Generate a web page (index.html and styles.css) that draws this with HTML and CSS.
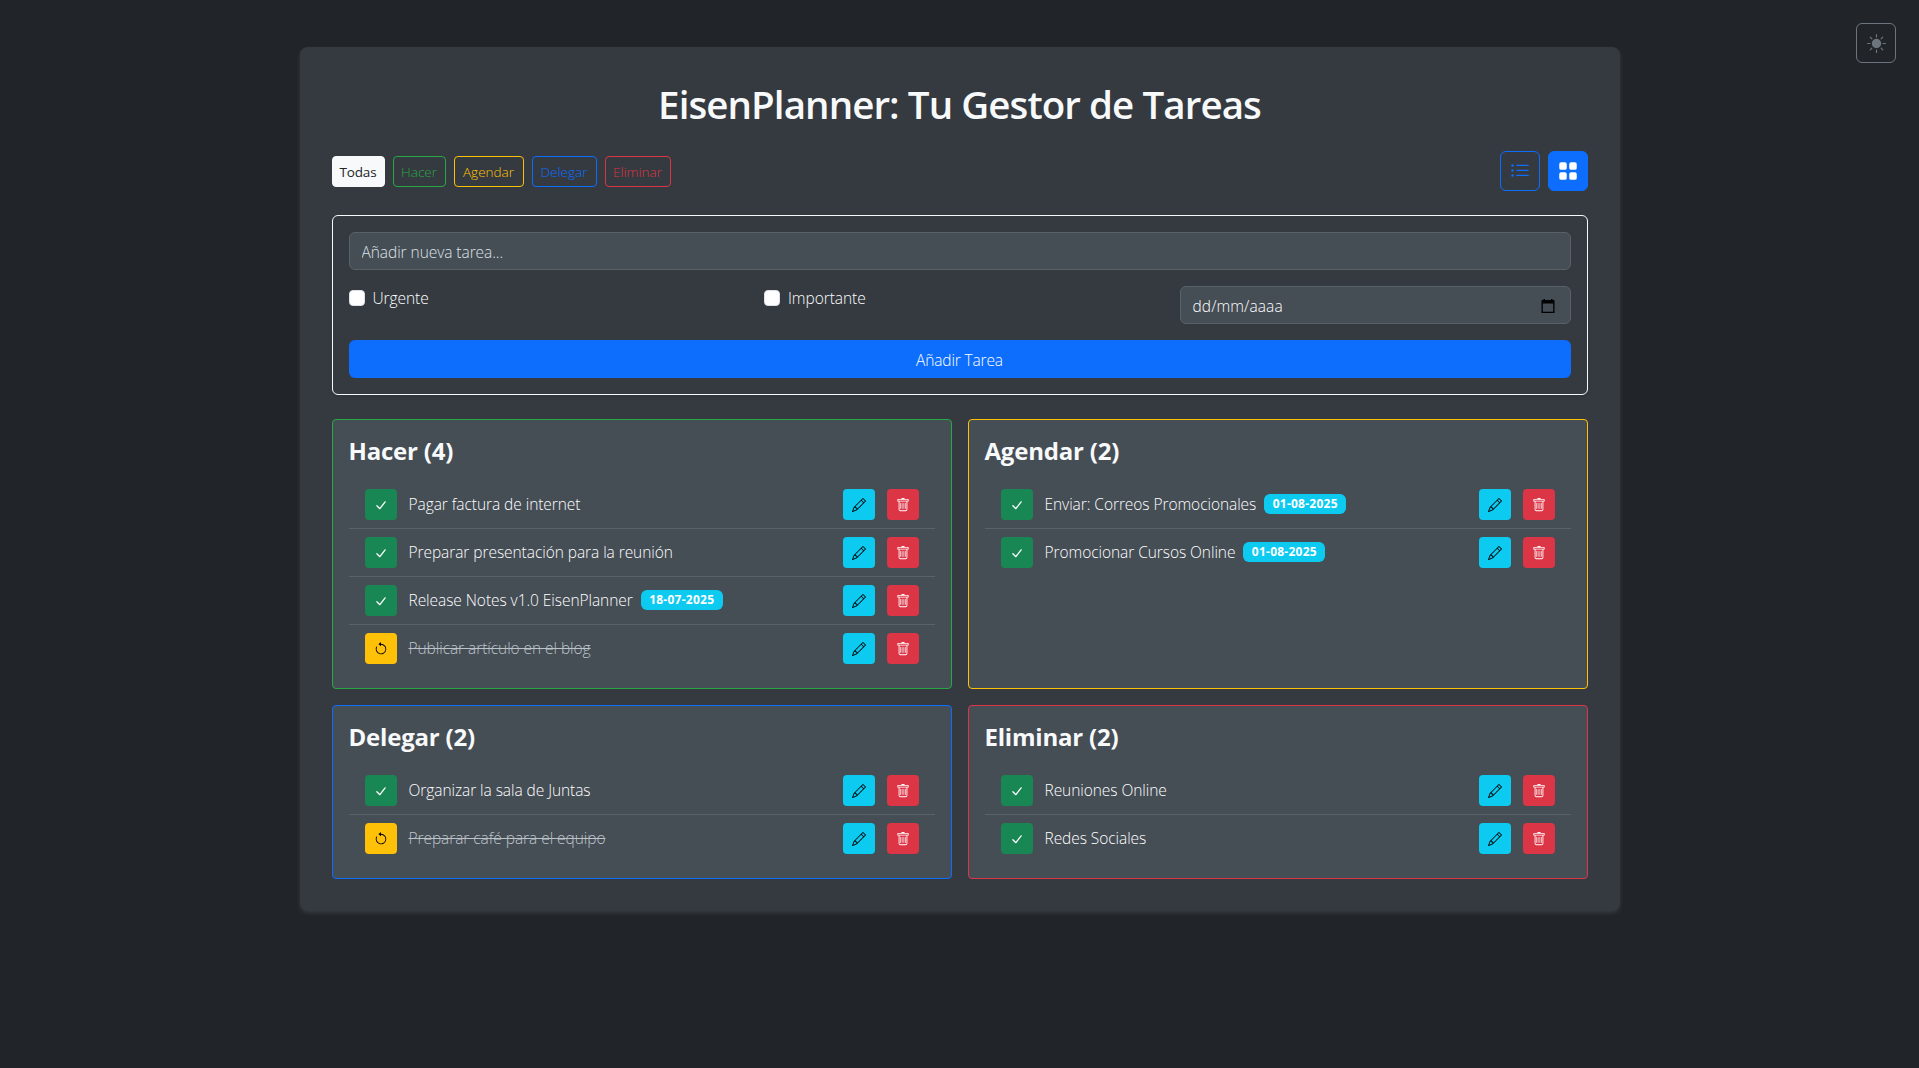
FILE: index.html
```html
<!DOCTYPE html>
<html lang="es">
<head>
<meta charset="utf-8">
<title>EisenPlanner: Tu Gestor de Tareas</title>
<link rel="stylesheet" href="styles.css">
</head>
<body>
<svg class="sprite" aria-hidden="true">
  <symbol id="sun" viewBox="0 0 16 16"><path d="M8 12a4 4 0 1 0 0-8 4 4 0 0 0 0 8M8 0a.5.5 0 0 1 .5.5v2a.5.5 0 0 1-1 0v-2A.5.5 0 0 1 8 0m0 13a.5.5 0 0 1 .5.5v2a.5.5 0 0 1-1 0v-2A.5.5 0 0 1 8 13m8-5a.5.5 0 0 1-.5.5h-2a.5.5 0 0 1 0-1h2a.5.5 0 0 1 .5.5M3 8a.5.5 0 0 1-.5.5h-2a.5.5 0 0 1 0-1h2A.5.5 0 0 1 3 8m10.657-5.657a.5.5 0 0 1 0 .707l-1.414 1.415a.5.5 0 1 1-.707-.708l1.414-1.414a.5.5 0 0 1 .707 0m-9.193 9.193a.5.5 0 0 1 0 .707L3.050 13.657a.5.5 0 0 1-.707-.707l1.414-1.414a.5.5 0 0 1 .707 0m9.193 2.121a.5.5 0 0 1-.707 0l-1.414-1.414a.5.5 0 0 1 .707-.707l1.414 1.414a.5.5 0 0 1 0 .707M4.464 4.465a.5.5 0 0 1-.707 0L2.343 3.050a.5.5 0 1 1 .707-.707l1.414 1.414a.5.5 0 0 1 0 .708"/></symbol>
  <symbol id="list" viewBox="0 0 16 16"><path fill-rule="evenodd" d="M5 11.500a.5.5 0 0 1 .5-.5h9a.5.5 0 0 1 0 1h-9a.5.5 0 0 1-.5-.5m0-4a.5.5 0 0 1 .5-.5h9a.5.5 0 0 1 0 1h-9a.5.5 0 0 1-.5-.5m0-4a.5.5 0 0 1 .5-.5h9a.5.5 0 0 1 0 1h-9a.5.5 0 0 1-.5-.5m-3 1a1 1 0 1 0 0-2 1 1 0 0 0 0 2m0 4a1 1 0 1 0 0-2 1 1 0 0 0 0 2m0 4a1 1 0 1 0 0-2 1 1 0 0 0 0 2"/></symbol>
  <symbol id="grid" viewBox="0 0 16 16"><path d="M1 2.500A1.500 1.500 0 0 1 2.500 1h3A1.500 1.500 0 0 1 7 2.500v3A1.500 1.500 0 0 1 5.500 7h-3A1.500 1.500 0 0 1 1 5.500zm8 0A1.500 1.500 0 0 1 10.500 1h3A1.500 1.500 0 0 1 15 2.500v3A1.500 1.500 0 0 1 13.500 7h-3A1.500 1.500 0 0 1 9 5.500zm-8 8A1.500 1.500 0 0 1 2.500 9h3A1.500 1.500 0 0 1 7 10.500v3A1.500 1.500 0 0 1 5.500 15h-3A1.500 1.500 0 0 1 1 13.500zm8 0A1.500 1.500 0 0 1 10.500 9h3a1.500 1.500 0 0 1 1.500 1.500v3a1.500 1.500 0 0 1-1.500 1.500h-3A1.500 1.500 0 0 1 9 13.500z"/></symbol>
  <symbol id="check" viewBox="0 0 16 16"><path d="M3.300 8.800 6.700 12.200 12.700 4.400" fill="none" stroke="currentColor" stroke-width="1.500" stroke-linecap="round" stroke-linejoin="round"/></symbol>
  <symbol id="undo" viewBox="0 0 16 16"><path fill-rule="evenodd" d="M8 3a5 5 0 1 1-4.546 2.914.5.5 0 0 0-.908-.417A6 6 0 1 0 8 2z"/><path d="M8 4.466V.534a.25.25 0 0 0-.41-.192L5.230 2.308a.25.25 0 0 0 0 .384l2.360 1.966A.25.25 0 0 0 8 4.466"/></symbol>
  <symbol id="pencil" viewBox="0 0 16 16"><path d="M12.146.146a.5.5 0 0 1 .708 0l3 3a.5.5 0 0 1 0 .708l-10 10a.5.5 0 0 1-.168.110l-5 2a.5.5 0 0 1-.650-.650l2-5a.5.5 0 0 1 .110-.168zM11.207 2.500 13.500 4.793 14.793 3.500 12.500 1.207zm1.586 3L10.500 3.207 4 9.707V10h.5a.5.5 0 0 1 .5.5v.5h.5a.5.5 0 0 1 .5.5v.5h.293zm-9.761 5.175-.106.106-1.528 3.821 3.821-1.528.106-.106A.5.5 0 0 1 5 12.500V12h-.5a.5.5 0 0 1-.5-.5V11h-.5a.5.5 0 0 1-.468-.325"/></symbol>
  <symbol id="trash" viewBox="0 0 16 16"><path d="M5.500 5.500A.5.5 0 0 1 6 6v6a.5.5 0 0 1-1 0V6a.5.5 0 0 1 .5-.5m2.500 0a.5.5 0 0 1 .5.5v6a.5.5 0 0 1-1 0V6a.5.5 0 0 1 .5-.5m3 .5a.5.5 0 0 0-1 0v6a.5.5 0 0 0 1 0z"/><path d="M14.500 3a1 1 0 0 1-1 1H13v9a2 2 0 0 1-2 2H5a2 2 0 0 1-2-2V4h-.5a1 1 0 0 1-1-1V2a1 1 0 0 1 1-1H6a1 1 0 0 1 1-1h2a1 1 0 0 1 1 1h3.500a1 1 0 0 1 1 1zM4.118 4 4 4.059V13a1 1 0 0 0 1 1h6a1 1 0 0 0 1-1V4.059L11.882 4zM2.500 3h11V2h-11z"/></symbol>
  <symbol id="calendar" viewBox="0 0 14 14"><path fill-rule="evenodd" d="M2.500 0H4v1h6V0h1.500v1H13a.5.5 0 0 1 .5.5v12a.5.5 0 0 1-.5.5H1a.5.5 0 0 1-.5-.5v-12A.5.5 0 0 1 1 1h1.500zM1.800 4.500v8.200h10.400V4.500z"/></symbol>
</svg>

<button class="theme-toggle" aria-label="Cambiar tema"><svg class="icon-theme"><use href="#sun"/></svg></button>

<main class="planner">
  <h1>EisenPlanner: Tu Gestor de Tareas</h1>

  <div class="toolbar">
    <div class="filters">
      <button class="filter filter-all">Todas</button>
      <button class="filter filter-do">Hacer</button>
      <button class="filter filter-plan">Agendar</button>
      <button class="filter filter-delegate">Delegar</button>
      <button class="filter filter-drop">Eliminar</button>
    </div>
    <div class="views">
      <button class="view" aria-label="Lista"><svg><use href="#list"/></svg></button>
      <button class="view view-active" aria-label="Matriz"><svg><use href="#grid"/></svg></button>
    </div>
  </div>

  <form class="task-form">
    <input class="field" type="text" placeholder="Añadir nueva tarea...">
    <div class="options">
      <label class="option"><input type="checkbox">Urgente</label>
      <label class="option"><input type="checkbox">Importante</label>
      <div class="field date"><span>dd/mm/aaaa</span><svg><use href="#calendar"/></svg></div>
    </div>
    <button class="submit" type="button">Añadir Tarea</button>
  </form>

  <div class="matrix">
    <section class="quadrant do">
      <h2>Hacer (4)</h2>
      <ul>
        <li><button class="btn done"><svg><use href="#check"/></svg></button><span class="text">Pagar factura de internet</span><button class="btn edit"><svg><use href="#pencil"/></svg></button><button class="btn delete"><svg><use href="#trash"/></svg></button></li>
        <li><button class="btn done"><svg><use href="#check"/></svg></button><span class="text">Preparar presentación para la reunión</span><button class="btn edit"><svg><use href="#pencil"/></svg></button><button class="btn delete"><svg><use href="#trash"/></svg></button></li>
        <li><button class="btn done"><svg><use href="#check"/></svg></button><span class="text">Release Notes v1.0 EisenPlanner</span><span class="badge">18-07-2025</span><button class="btn edit"><svg><use href="#pencil"/></svg></button><button class="btn delete"><svg><use href="#trash"/></svg></button></li>
        <li><button class="btn undo"><svg><use href="#undo"/></svg></button><span class="text completed">Publicar artículo en el blog</span><button class="btn edit"><svg><use href="#pencil"/></svg></button><button class="btn delete"><svg><use href="#trash"/></svg></button></li>
      </ul>
    </section>
    <section class="quadrant plan">
      <h2>Agendar (2)</h2>
      <ul>
        <li><button class="btn done"><svg><use href="#check"/></svg></button><span class="text">Enviar: Correos Promocionales</span><span class="badge">01-08-2025</span><button class="btn edit"><svg><use href="#pencil"/></svg></button><button class="btn delete"><svg><use href="#trash"/></svg></button></li>
        <li><button class="btn done"><svg><use href="#check"/></svg></button><span class="text">Promocionar Cursos Online</span><span class="badge">01-08-2025</span><button class="btn edit"><svg><use href="#pencil"/></svg></button><button class="btn delete"><svg><use href="#trash"/></svg></button></li>
      </ul>
    </section>
    <section class="quadrant delegate">
      <h2>Delegar (2)</h2>
      <ul>
        <li><button class="btn done"><svg><use href="#check"/></svg></button><span class="text">Organizar la sala de Juntas</span><button class="btn edit"><svg><use href="#pencil"/></svg></button><button class="btn delete"><svg><use href="#trash"/></svg></button></li>
        <li><button class="btn undo"><svg><use href="#undo"/></svg></button><span class="text completed">Preparar café para el equipo</span><button class="btn edit"><svg><use href="#pencil"/></svg></button><button class="btn delete"><svg><use href="#trash"/></svg></button></li>
      </ul>
    </section>
    <section class="quadrant drop">
      <h2>Eliminar (2)</h2>
      <ul>
        <li><button class="btn done"><svg><use href="#check"/></svg></button><span class="text">Reuniones Online</span><button class="btn edit"><svg><use href="#pencil"/></svg></button><button class="btn delete"><svg><use href="#trash"/></svg></button></li>
        <li><button class="btn done"><svg><use href="#check"/></svg></button><span class="text">Redes Sociales</span><button class="btn edit"><svg><use href="#pencil"/></svg></button><button class="btn delete"><svg><use href="#trash"/></svg></button></li>
      </ul>
    </section>
  </div>
</main>
</body>
</html>
```
FILE: styles.css
```css
*, *::before, *::after { box-sizing: border-box; }

body {
  margin: 0;
  min-height: 100vh;
  padding-top: 47px;
  background: #212529;
  color: #fff;
  font: 300 15.5px/24px "Open Sans", "Noto Sans", sans-serif;
  letter-spacing: -0.06px;
}

button, input {
  font: inherit;
  letter-spacing: inherit;
}

button {
  display: flex;
  align-items: center;
  justify-content: center;
  padding: 0;
  border: 1px solid transparent;
  background: none;
}

svg { fill: currentColor; }
.sprite { display: none; }

.theme-toggle {
  position: absolute;
  top: 23px;
  right: 23px;
  width: 40px;
  height: 40px;
  border-color: #6c757d;
  border-radius: 6px;
  color: #6c757d;
}
.icon-theme { width: 19px; height: 19px; }

.planner {
  width: 1320px;
  margin: 0 auto;
  padding: 32px;
  border-radius: 8px;
  background: #343a40;
  box-shadow: 0 2px 4px rgba(255, 255, 255, 0.1);
}

h1 {
  margin: 0 0 23px;
  padding-top: 1px;
  color: #f8f9fa;
  font-size: 38.5px;
  font-weight: 600;
  line-height: 48px;
  letter-spacing: -0.92px;
  text-align: center;
}

.toolbar {
  display: flex;
  align-items: center;
  justify-content: space-between;
  margin-bottom: 24px;
}
.filters, .views { display: flex; gap: 8px; }

.filter {
  height: 31px;
  padding-top: 1px;
  border-color: currentColor;
  border-radius: 4px;
  font-size: 13.5px;
  letter-spacing: 0;
}
.filter-all {
  width: 53px;
  border-color: #f8f9fa;
  background: #f8f9fa;
  color: #212529;
  font-weight: 400;
  letter-spacing: -0.15px;
}
.filter-do { width: 53px; color: #28a745; }
.filter-plan { width: 70px; color: #ffc107; }
.filter-delegate { width: 65px; color: #0d6efd; }
.filter-drop { width: 66px; color: #dc3545; }

.view {
  width: 40px;
  height: 40px;
  border-color: #0d6efd;
  border-radius: 6px;
  color: #0d6efd;
}
.view svg { width: 20px; height: 20px; }
.view-active { background: #0d6efd; color: #fff; }

.task-form {
  display: flex;
  flex-direction: column;
  gap: 16px;
  margin-bottom: 24px;
  padding: 16px;
  border: 1px solid #f8f9fa;
  border-radius: 6px;
  box-shadow: 0 2px 4px rgba(0, 0, 0, 0.08);
}

.field {
  width: 100%;
  height: 38px;
  padding: 1px 12px 0;
  border: 1px solid #5a6268;
  border-radius: 6px;
  background: #454d55;
  color: #fff;
}
.field::placeholder { color: #dee2e6; opacity: 1; }

.options {
  display: grid;
  grid-template-columns: 1fr 1fr 391px;
  gap: 24px;
}
.option { display: flex; gap: 8px; line-height: 25px; }
.option input {
  width: 16px;
  height: 16px;
  margin: 4px 0 0;
  appearance: none;
  border: 1px solid #dee2e6;
  border-radius: 4px;
  background: #fff;
}
.date {
  display: flex;
  align-items: center;
  justify-content: space-between;
  padding-right: 15px;
  letter-spacing: 0.1px;
}
.date svg { width: 14px; height: 14px; fill: #000; }

.submit {
  height: 38px;
  padding-top: 1px;
  border-radius: 6px;
  background: #0d6efd;
  letter-spacing: -0.15px;
  color: #fff;
}

.matrix {
  display: grid;
  grid-template-columns: 1fr 1fr;
  gap: 16px;
}

.quadrant {
  padding: 16px;
  border: 1px solid;
  border-radius: 4px;
  background: #454d55;
}
.do { border-color: #28a745; }
.plan { border-color: #ffc107; }
.delegate { border-color: #0d6efd; }
.drop { border-color: #dc3545; }

h2 {
  margin: 0 0 15px;
  padding-top: 1px;
  color: #f8f9fa;
  font-size: 24px;
  font-weight: 700;
  line-height: 28.8px;
  letter-spacing: -0.2px;
}

ul { margin: 0; padding: 0; list-style: none; }
li {
  display: flex;
  align-items: center;
  padding: 8px 16px;
}
li + li { border-top: 1px solid #5a6268; }

.text { margin: 0 8px 1px 12px; }
.completed { color: #bcc3c9; text-decoration: line-through; }

.badge {
  width: 82px;
  height: 20px;
  border-radius: 6px;
  background: #0dcaf0;
  color: #fff;
  font-size: 12px;
  font-weight: 700;
  line-height: 19px;
  letter-spacing: 0.25px;
  text-align: center;
}

.btn {
  width: 32px;
  height: 31px;
  flex: none;
  padding-top: 1px;
  border-radius: 4px;
}
.btn svg { width: 14px; height: 14px; }
.done { background: #198754; color: #fff; }
.undo { background: #ffc107; color: #000; }
.edit { margin-left: auto; background: #0dcaf0; color: #000; }
.delete { margin-left: 12px; background: #dc3545; color: #fff; }
```
